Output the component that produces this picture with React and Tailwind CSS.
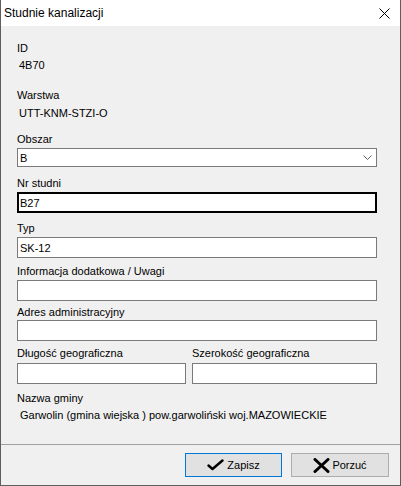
import React from "react";

const font = { fontFamily: '"Liberation Sans", Arial, sans-serif' };

function Label({ children, className = "" }) {
  return <div className={"h-[16px] leading-[16px] text-[11px] text-black whitespace-nowrap " + className}>{children}</div>;
}

function Box({ children, className = "" }) {
  return (
    <div className={"h-[21px] bg-white border border-[#7a7a7a] flex items-center px-[2px] text-[11px] leading-[16px] text-black " + className}>
      {children}
    </div>
  );
}

function CheckIcon() {
  return (
    <svg width="17" height="12" viewBox="0 0 17 12">
      <path d="M1.5 6.5 L5.5 10 L15.5 1.5" stroke="#000" strokeWidth="2.4" fill="none" strokeLinecap="round" strokeLinejoin="round" />
    </svg>
  );
}

function XIcon() {
  return (
    <svg width="17" height="15" viewBox="0 0 17 15">
      <path d="M2 1.5 L15 13.5 M15 1.5 L2 13.5" stroke="#000" strokeWidth="3" fill="none" strokeLinecap="round" />
    </svg>
  );
}

export default function App() {
  return (
    <div className="w-[401px] h-[486px] bg-[#f0f0f0] flex flex-col border-l border-r border-b border-[#5e5e5e] overflow-hidden" style={font}>
      {/* title bar */}
      <div className="h-[26px] bg-white flex items-center justify-between pl-[3px] pr-[10px] shrink-0">
        <span className="text-[12px] leading-[16px] text-black mt-[-1px]">Studnie kanalizacji</span>
        <svg width="11" height="11" viewBox="0 0 11 11" className="mt-[1px]">
          <path d="M0.5 0.5 L10.5 10.5 M10.5 0.5 L0.5 10.5" stroke="#000" strokeWidth="1" fill="none" />
        </svg>
      </div>

      {/* content */}
      <div className="flex flex-col pl-[16px] pr-[23px] flex-1">
        <Label className="mt-[14px]">ID</Label>
        <Label className="mt-[1px] pl-[2px]">4B70</Label>
        <Label className="mt-[14px]">Warstwa</Label>
        <Label className="mt-[2px] pl-[2px]">UTT-KNM-STZI-O</Label>
        <Label className="mt-[10px]">Obszar</Label>
        <div className="mt-[1px] h-[19px] bg-white border border-[#7a7a7a] flex items-center justify-between pl-[2px] pr-[4px] text-[11px] leading-[16px]">
          <span>B</span>
          <svg width="9" height="5" viewBox="0 0 9 5">
            <path d="M0.5 0.5 L4.5 4.5 L8.5 0.5" stroke="#606060" strokeWidth="1" fill="none" />
          </svg>
        </div>
        <Label className="mt-[8px]">Nr studni</Label>
        <div className="mt-[1px] h-[21px] bg-white border-2 border-black flex items-center px-[1px] text-[11px] leading-[16px] text-black">B27</div>
        <Label className="mt-[7px]">Typ</Label>
        <Box className="mt-[1px]">SK-12</Box>
        <Label className="mt-[5px]">Informacja dodatkowa / Uwagi</Label>
        <Box className="mt-[1px]" />
        <Label className="mt-[3px]">Adres administracyjny</Label>
        <Box />
        <div className="flex gap-[6px] mt-[4px]">
          <div className="flex flex-col w-[169px]">
            <Label>Długość geograficzna</Label>
            <Box className="mt-[2px]" />
          </div>
          <div className="flex flex-col flex-1">
            <Label>Szerokość geograficzna</Label>
            <Box className="mt-[2px]" />
          </div>
        </div>
        <Label className="mt-[6px]">Nazwa gminy</Label>
        <Label className="mt-[1px] pl-[3px]">Garwolin (gmina wiejska ) pow.garwoliński woj.MAZOWIECKIE</Label>
      </div>

      {/* footer */}
      <div className="h-[41px] border-t border-[#a0a0a0] flex items-start justify-end gap-[9px] pr-[11px] pt-[8px] shrink-0">
        <button className="w-[97px] h-[24px] bg-[#e1e1e1] border border-[#0078d7] flex items-center justify-center gap-[3px] text-[11px] leading-[16px] text-black" style={font}>
          <CheckIcon />
          <span>Zapisz</span>
        </button>
        <button className="w-[98px] h-[24px] bg-[#e1e1e1] border border-[#adadad] flex items-center justify-center gap-[2px] text-[11px] leading-[16px] text-black" style={font}>
          <XIcon />
          <span>Porzuć</span>
        </button>
      </div>
    </div>
  );
}
